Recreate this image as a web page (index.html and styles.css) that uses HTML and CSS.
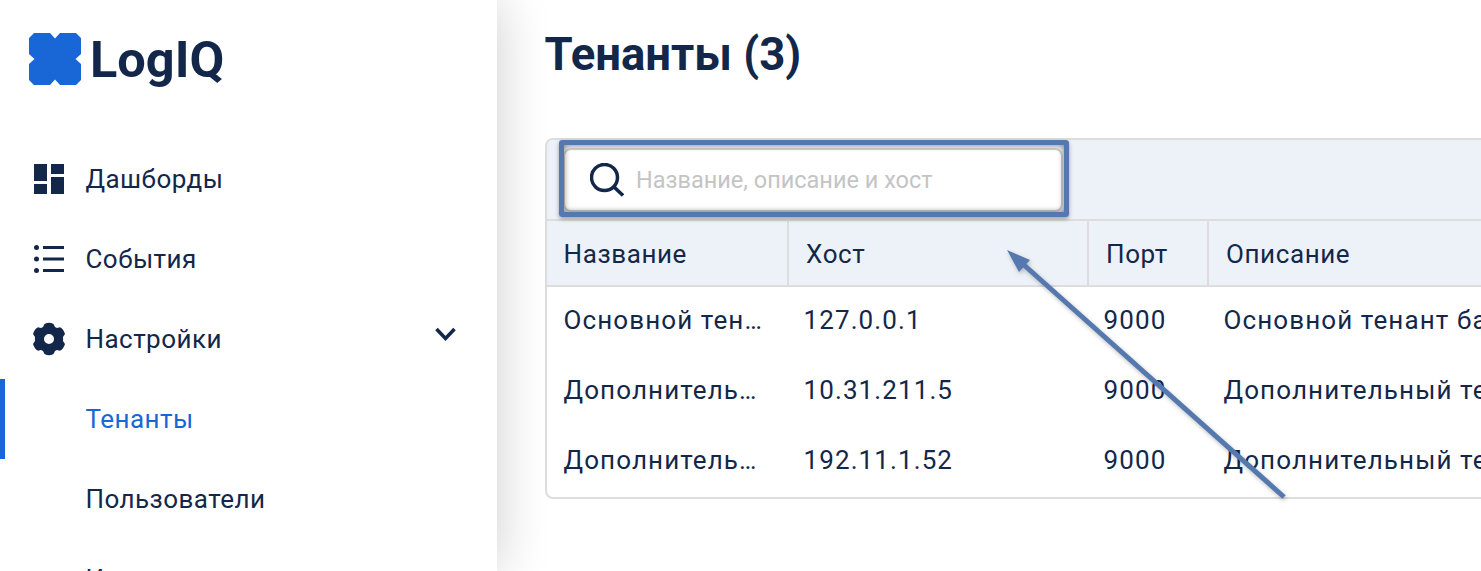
FILE: index.html
```html
<!DOCTYPE html>
<html lang="ru">
<head>
    <meta charset="UTF-8">
    <meta name="viewport" content="width=device-width, initial-scale=1.0">
    <title>Тенанты</title>
    <link rel="stylesheet" href="styles.css">
</head>
<body>
    <div class="app">
        <aside class="sidebar">
            <div class="logo">
                <svg class="logo-icon" viewBox="0 0 52 52"><path d="M5 0H21L26 5.500L31 0H47L52 5V21L46.500 26L52 31V47L47 52H31L26 46.500L21 52H5L0 47V31L5.500 26L0 21V5Z"/></svg>
                <span class="logo-text">LogIQ</span>
            </div>
            <nav class="menu">
                <a class="menu-item">
                    <svg class="menu-icon" viewBox="0 0 30 30"><path d="M0 0H13V17H0ZM0 20H13V30H0ZM17 0H30V10H17ZM17 13H30V30H17Z"/></svg>
                    <span>Дашборды</span>
                </a>
                <a class="menu-item">
                    <svg class="menu-icon" viewBox="0 0 30 30"><circle cx="2.500" cy="3.500" r="2.500"/><circle cx="2.500" cy="15" r="2.500"/><circle cx="2.500" cy="26.500" r="2.500"/><path d="M9 2H30V5H9ZM9 13.500H30V16.500H9ZM9 25H30V28H9Z"/></svg>
                    <span>События</span>
                </a>
                <a class="menu-item">
                    <svg class="menu-icon gear" viewBox="0 0 32 34"><path fill-rule="evenodd" d="M11.500 2Q16 -0.500 20.500 2L22 5Q23 5.500 24 6L27 5.200Q30.500 7 32 12L30 15Q30.200 17 30 19L32 22Q30.500 27 27 28.800L24 28Q23 28.500 22 29L20.500 32Q16 34.500 11.500 32L10 29Q9 28.500 8 28L5 28.800Q1.500 27 0 22L2 19Q1.800 17 2 15L0 12Q1.500 7 5 5.200L8 6Q9 5.500 10 5ZM16 12A5 5 0 1 0 16 22A5 5 0 1 0 16 12Z"/></svg>
                    <span>Настройки</span>
                    <svg class="chevron" viewBox="0 0 21 14"><path d="M1.500 2L10.500 11.500L19.500 2"/></svg>
                </a>
                <a class="menu-item sub active"><span>Тенанты</span></a>
                <a class="menu-item sub"><span>Пользователи</span></a>
                <a class="menu-item sub"><span>Интеграции</span></a>
            </nav>
        </aside>
        <main class="content">
            <h1 class="title">Тенанты (3)</h1>
            <section class="table-card">
                <div class="toolbar">
                    <div class="search">
                        <svg class="search-icon" viewBox="0 0 34 34"><circle cx="14.500" cy="14.500" r="13"/><path d="M24 24L33 32.500"/></svg>
                        <span class="placeholder">Название, описание и хост</span>
                    </div>
                </div>
                <div class="row head">
                    <div class="cell">Название</div>
                    <div class="cell">Хост</div>
                    <div class="cell">Порт</div>
                    <div class="cell">Описание</div>
                </div>
                <div class="row">
                    <div class="cell">Основной тенант</div>
                    <div class="cell">127.0.0.1</div>
                    <div class="cell">9000</div>
                    <div class="cell">Основной тенант базы данных</div>
                </div>
                <div class="row">
                    <div class="cell">Дополнительный тенант</div>
                    <div class="cell">10.31.211.5</div>
                    <div class="cell">9000</div>
                    <div class="cell">Дополнительный тенант базы данных</div>
                </div>
                <div class="row">
                    <div class="cell">Дополнительный тенант</div>
                    <div class="cell">192.11.1.52</div>
                    <div class="cell">9000</div>
                    <div class="cell">Дополнительный тенант базы данных</div>
                </div>
            </section>
        </main>
        <div class="note-box"></div>
        <svg class="note-arrow" viewBox="0 0 300 270">
            <path class="arrow-line" d="M277 247L17 15"/>
            <path class="arrow-head" d="M0 0L23 10L12 22Z"/>
        </svg>
    </div>
</body>
</html>
```

FILE: styles.css
```css
* {
    margin: 0;
    padding: 0;
    box-sizing: border-box;
}

html, body {
    height: 100%;
    overflow: hidden;
}

body {
    font-family: 'Roboto', sans-serif;
    background-color: #ffffff;
    color: #13274a;
}

.app {
    position: relative;
    display: flex;
    height: 571px;
    overflow: hidden;
}

.sidebar {
    flex: 0 0 497px;
    background-color: #ffffff;
    box-shadow: 0 0 50px rgba(0, 0, 0, 0.2);
    z-index: 1;
}

.logo {
    display: flex;
    align-items: flex-start;
    gap: 9px;
    padding: 33px 0 0 29px;
    height: 139px;
}

.logo-icon {
    width: 52px;
    height: 52px;
    fill: #1967d6;
}

.logo-text {
    font-size: 50.5px;
    line-height: 54px;
    font-weight: 700;
}

.menu-item {
    display: flex;
    align-items: center;
    height: 80px;
    padding-left: 34px;
    font-size: 26px;
    letter-spacing: 0.45px;
    position: relative;
}

.menu-icon {
    width: 30px;
    height: 30px;
    margin-right: 21.5px;
    fill: #13274a;
    flex: none;
}

.gear {
    width: 32px;
    height: 34px;
    margin-left: -1px;
    margin-right: 20.5px;
}

.chevron {
    width: 21px;
    height: 14px;
    margin-left: auto;
    margin-right: 41px;
    margin-top: -10px;
    fill: none;
    stroke: #13274a;
    stroke-width: 3.5;
}

.sub {
    padding-left: 85.5px;
}

.active {
    color: #1967d6;
    border-left: 5px solid #1967d6;
    padding-left: 80.5px;
}

.content {
    flex: none;
    width: 984px;
    padding-left: 48px;
}

.title {
    font-size: 45.5px;
    line-height: 52px;
    font-weight: 700;
    margin-top: 29px;
    margin-bottom: 57px;
    margin-left: -0.5px;
    white-space: nowrap;
}

.table-card {
    width: 1300px;
    border: 2px solid #dddddd;
    border-radius: 8px;
    font-size: 26px;
    letter-spacing: 1.1px;
}

.toolbar {
    height: 81px;
    padding: 8px 16px;
    background-color: #edf2f9;
    border-bottom: 2px solid #dddddd;
    border-radius: 6px 6px 0 0;
}

.search {
    display: flex;
    align-items: center;
    width: 500px;
    height: 64px;
    background-color: #ffffff;
    border: 2px solid #d0d0d0;
    border-radius: 8px;
    padding-left: 25px;
}

.search-icon {
    width: 34px;
    height: 34px;
    fill: none;
    stroke: #13274a;
    stroke-width: 3.5;
    margin-right: 12px;
    flex: none;
}

.placeholder {
    font-size: 23.5px;
    letter-spacing: 0;
    color: #c4c4c4;
}

.row {
    display: grid;
    grid-template-columns: 242px 300px 120px 1fr;
    height: 70px;
    padding-bottom: 4px;
    align-items: center;
}

.head {
    height: 66px;
    padding-bottom: 0;
    letter-spacing: 0.6px;
    background-color: #edf2f9;
    border-bottom: 2px solid #dddddd;
    align-items: stretch;
}

.cell {
    padding: 0 18px 0 14.5px;
    white-space: nowrap;
    overflow: hidden;
    text-overflow: ellipsis;
}

.cell:first-child {
    padding-left: 16.5px;
}

.head .cell {
    display: flex;
    align-items: center;
    padding-top: 2px;
    padding-left: 17px;
    border-right: 2px solid #dddddd;
}

.head .cell:first-child {
    padding-left: 16.5px;
}

.head .cell:last-child {
    border-right: none;
}

.note-box {
    position: absolute;
    left: 559px;
    top: 140px;
    width: 510px;
    height: 77px;
    border: 5px solid #5579ae;
    border-radius: 3px;
    box-shadow: 0 2px 4px rgba(0, 0, 0, 0.35), inset 0 0 6px rgba(0, 0, 0, 0.5);
    z-index: 2;
}

.note-arrow {
    position: absolute;
    left: 1007px;
    top: 250px;
    width: 300px;
    height: 270px;
    z-index: 2;
    overflow: visible;
    filter: drop-shadow(1px 2px 2px rgba(0, 0, 0, 0.25));
}

.arrow-line {
    fill: none;
    stroke: #5579ae;
    stroke-width: 5;
}

.arrow-head {
    fill: #5579ae;
}
```
